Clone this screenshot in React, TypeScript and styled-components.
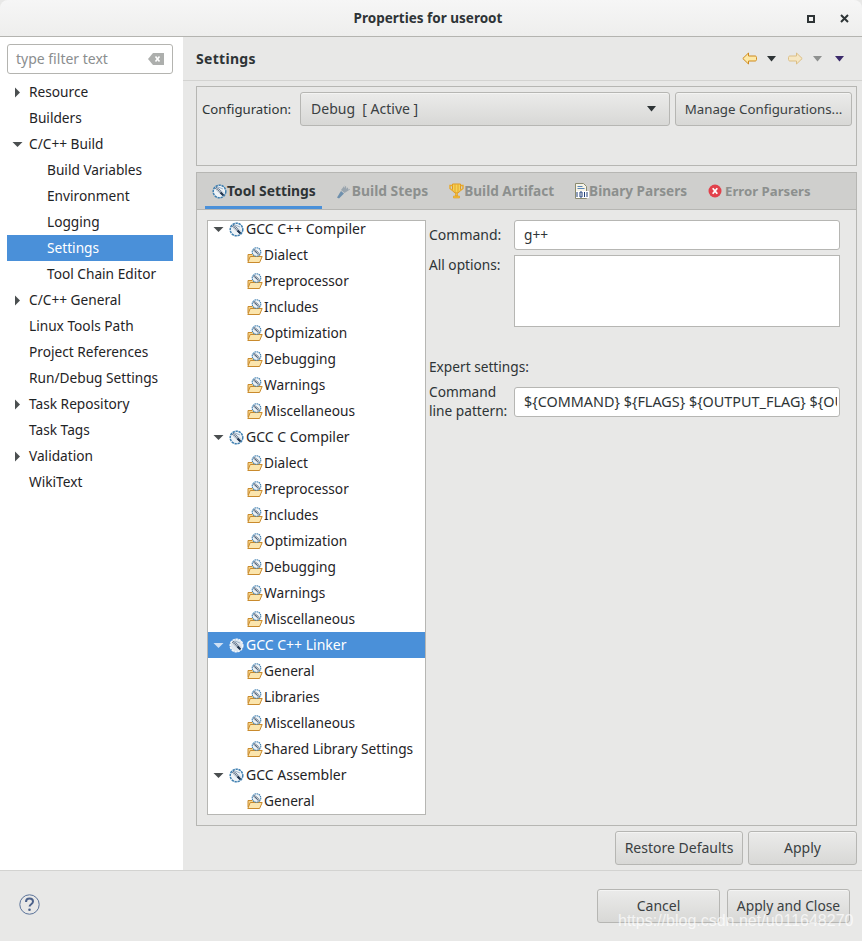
import React from "react";
import styled, { createGlobalStyle } from "styled-components";

const Global = createGlobalStyle`
  html, body { margin: 0; padding: 0; height: 941px; overflow: hidden; background: #fff; }
  #root { height: 941px; }
  * { box-sizing: border-box; }
`;

const Dialog = styled.div`
  width: 862px; height: 941px; position: relative; display: flex; flex-direction: column;
  background: #e8e8e7; color: #2e3436; font: 13.7px/20px "Noto Sans", sans-serif; overflow: hidden;
`;
const TitleBar = styled.header`
  height: 37px; flex: none; display: flex; align-items: center; position: relative;
  justify-content: center; padding-right: 6px; background: linear-gradient(#f6f6f6, #eeeeed);
  border-bottom: 1px solid #b4b4b0; border-radius: 8px 8px 0 0;
`;
const Title = styled.h1`margin: 0; font-size: 13.5px; font-weight: 700; color: #2e3436;`;
const WindowButtons = styled.div`
  position: absolute; right: 13px; top: 14px; display: flex; gap: 25px; align-items: center;
`;
const Body = styled.div`flex: 1; display: flex; min-height: 0;`;
const Sidebar = styled.nav`
  width: 183px; flex: none; background: #fff; padding: 7px 10px 0 7px;
`;
const FilterBox = styled.div`
  height: 30px; width: 166px; border: 1px solid #b4b4b0; border-radius: 3px; display: flex;
  align-items: center; justify-content: space-between; padding: 0 8px; margin-bottom: 5px; background: #fff;
`;
const FilterText = styled.span`color: #8b8e8f; font-size: 14px;`;
const NavRow = styled.div<{ $level: number; $selected?: boolean }>`
  height: 26px; display: flex; align-items: center; width: 166px; color: ${p => p.$selected ? "#fff" : "#1f2426"};
  background: ${p => p.$selected ? "#4a90d9" : "transparent"};
  padding-left: ${p => p.$level === 1 ? 40 : 22}px; position: relative; white-space: nowrap;
`;
const ArrowSlot = styled.span`position: absolute; left: 5px; top: 8px; width: 11px; height: 11px; display: flex;`;
const Main = styled.main`flex: 1; display: flex; flex-direction: column; padding: 0 5px 5px 0; min-width: 0;`;
const SettingsHeader = styled.div`
  height: 44px; margin-right: -5px; padding: 0 17px 0 13px; display: flex; align-items: center; justify-content: space-between;
  border-bottom: 1px solid #d3d3d1; flex: none;
`;
const SettingsTitle = styled.h2`margin: 0; font-size: 14px; font-weight: 700; color: #2e3436; letter-spacing: .3px;`;
const NavTools = styled.div`display: flex; align-items: center; gap: 11px;`;
const NavGroup = styled.div`display: flex; align-items: center; gap: 9px;`;
const Pane = styled.div`flex: 1; margin-left: 13px; display: flex; flex-direction: column; min-height: 0;`;
const ConfigGroup = styled.section`
  margin-top: 5px; height: 80px; flex: none; border: 1px solid #b6b6b3; padding: 5px 4px 0 5px;
  display: flex; align-items: flex-start; gap: 5px;
`;
const ConfigLabel = styled.label`line-height: 35px; margin-right: 4px; white-space: nowrap; font-size: 13.2px;`;
const Button = styled.button<{ $w?: number; $size?: number }>`
  height: 34px; width: ${p => p.$w ? `${p.$w}px` : "auto"}; border: 1px solid #b6b6b3; border-radius: 3px;
  background: linear-gradient(#ebebea, #d8d8d6); color: #3a4042; font: inherit; font-size: ${p => p.$size ?? 13.8}px; padding: 0 6px; white-space: nowrap;
  flex: none; box-shadow: inset 0 1px #f4f4f3;
`;
const Combo = styled(Button)`
  flex: 1; display: flex; align-items: center; justify-content: space-between; padding: 0 12px 0 10px; white-space: pre;
`;
const Folder = styled.section`
  margin-top: 6px; flex: 1; min-height: 0; border: 1px solid #b6b6b3; display: flex; flex-direction: column;
`;
const TabStrip = styled.div`
  height: 37px; flex: none; background: #cfcfcd; border-bottom: 1px solid #b6b6b3; display: flex; gap: 8px; padding-left: 8px;
`;
const Tab = styled.div<{ $active?: boolean; $size?: number }>`
  height: 36px; display: flex; align-items: center; padding: 0 6px 0 7px; font-size: ${p => p.$size ?? 13.6}px; font-weight: 700; white-space: nowrap;
  color: ${p => p.$active ? "#2e3436" : "#8c8f8e"};
  box-shadow: ${p => p.$active ? "inset 0 -3px #4a90d9" : "none"};
`;
const TabBody = styled.div`flex: 1; display: flex; padding: 10px 16px 10px 10px; min-height: 0;`;
const TreeBox = styled.div`
  width: 219px; flex: none; background: #fff; border: 1px solid #b6b6b3; overflow: hidden;
`;
const TreeScroll = styled.div`margin-top: -5px;`;
const TreeRow = styled.div<{ $child?: boolean; $selected?: boolean }>`
  height: 26px; display: flex; align-items: center; white-space: nowrap; position: relative;
  padding-left: ${p => p.$child ? 39 : 21}px; color: ${p => p.$selected ? "#fff" : "#1f2426"};
  background: ${p => p.$selected ? "#4a90d9" : "transparent"};
`;
const TreeArrow = styled.span`position: absolute; left: 5px; top: 8px; width: 11px; height: 11px; display: flex;`;
const GroupName = styled.span`margin-left: 2px; font-size: 14px;`;
const Form = styled.div`
  flex: 1; padding-left: 3px; display: grid; grid-template-columns: 85px 326px; grid-template-rows: 30px 72px 20px 25px 30px;
  row-gap: 5px; align-content: start;
`;
const FormLabel = styled.label`line-height: 30px; white-space: nowrap; font-size: 14px;`;
const OptionsLabel = styled.label`line-height: 20px; white-space: nowrap;`;
const PatternLabel = styled.label`grid-row: 5; grid-column: 1; line-height: 19px; white-space: nowrap; margin-top: -5px;`;
const Input = styled.div`
  background: #fff; border: 1px solid #b6b6b3; border-radius: 3px; padding: 0 8px 0 9px; line-height: 28px;
  color: #2e3436; white-space: nowrap;
`;
const PatternInput = styled(Input)`grid-row: 5; grid-column: 2; padding-right: 2px; font-size: 14.4px;`;
const PatternText = styled.span`display: block; overflow: hidden;`;
const TextArea = styled(Input)`border-radius: 0;`;
const ExpertTitle = styled.div`grid-column: 1 / 3; grid-row: 4; line-height: 20px;`;
const ButtonRow = styled.div`display: flex; justify-content: flex-end; gap: 5px; margin-top: 5px; flex: none;`;
const Footer = styled.footer`
  height: 71px; flex: none; border-top: 1px solid #d3d3d1; padding: 18px 12px 0 19px; display: flex; align-items: flex-start; justify-content: space-between;
`;
const HelpWrap = styled.div`margin-top: 5px; display: flex;`;
const FooterButtons = styled.div`display: flex; gap: 7px;`;
const Watermark = styled.div`
  position: absolute; left: 618px; top: 912px; color: rgba(255,255,255,0.72); font: 16px/18px "Liberation Sans", sans-serif; white-space: nowrap;
`;

const Tri = ({ open, color = "#4b4f50" }: { open?: boolean; color?: string }) => (
  <svg width="11" height="11" viewBox="0 0 11 11">
    {open ? <path d="M0.5 3h10L5.5 8z" fill={color} /> : <path d="M3 0.5v10l5-5z" fill={color} />}
  </svg>
);

const ToolIcon = ({ light }: { light?: boolean }) => (
  <svg width="15" height="15" viewBox="0 0 15 15" style={{ flex: "none" }}>
    <circle cx="7.5" cy="7.5" r="6.3" fill={light ? "#dfe6ee" : "#eef3f7"} stroke={light ? "#f4f7fa" : "#3f7fb0"} strokeWidth="1.5" strokeDasharray="2.4 0.7" />
    <path d="M4 3.5l6.5 6.5" stroke="#5d6f86" strokeWidth="3" strokeDasharray="1 .7" />
    <path d="M8.5 8.5l3 3" stroke="#22354f" strokeWidth="2" />
    <path d="M6 3l5 2" stroke="#9db3c8" strokeWidth="1" />
  </svg>
);

const OptionIcon = () => (
  <svg width="16" height="17" viewBox="0 0 16 17" style={{ flex: "none", marginRight: 1 }}>
    <path d="M1 7.5h4l1-1h6V14H1z" fill="#f7d48a" stroke="#c98a2c" />
    <path d="M0.8 15.5l2.4-6h12l-2.6 6z" fill="#fbe5ad" stroke="#c98a2c" />
    <circle cx="9.5" cy="5" r="4.3" fill="#eef3f7" stroke="#3f7fb0" strokeWidth="1.1" strokeDasharray="1.6 0.6" />
    <path d="M7 2.8l5 4.6" stroke="#47596f" strokeWidth="2.4" strokeDasharray="1 .6" />
  </svg>
);

const HammerIcon = () => (
  <svg width="15" height="15" viewBox="0 0 15 15" style={{ flex: "none" }}>
    <path d="M0 13.5l4-6.5 3 2.5-5 5z" fill="#6f90ad" />
    <path d="M4 6l3.5-4.5L13 5.5 7.5 9z" fill="#9aa5ae" />
    <path d="M7.5 1.5v2M9.5 2.5v2M11.5 3.5v2" stroke="#cfcfcd" strokeWidth=".8" />
  </svg>
);
const TrophyIcon = () => (
  <svg width="15" height="16" viewBox="0 0 15 16" style={{ flex: "none" }}>
    <path d="M3.5 1h8v5.5c0 2-1.7 3.5-4 3.5s-4-1.5-4-3.5z" fill="#f6d257" stroke="#e09a1f" />
    <path d="M6 1.5v7.5M9 1.5v7.5" stroke="#e09a1f" strokeWidth=".8" />
    <path d="M3.5 2.5H1v3l2.5 2M11.5 2.5H14v3l-2.5 2" fill="none" stroke="#e8a92a" strokeWidth="1.4" />
    <path d="M6.5 10h2v3h-2zM4.5 13h6v2h-6z" fill="#f1bf3c" stroke="#e09a1f" strokeWidth=".6" />
  </svg>
);
const BinaryIcon = () => (
  <svg width="14" height="16" viewBox="0 0 14 16" style={{ flex: "none" }}>
    <path d="M.5.5h8l3 3v12H.5z" fill="#f6f3e6" stroke="#8a8a70" />
    <path d="M2.5 3.5h5M2.5 5.5h7" stroke="#5a86b8" />
    <rect x="1" y="8" width="13" height="7" fill="#fff" />
    <path d="M2 9v5M5 9h2v5H5zM9.5 9v5M12 9v5" stroke="#1f3f78" fill="none" />
  </svg>
);
const ErrorIcon = () => (
  <svg width="14" height="14" viewBox="0 0 14 14" style={{ flex: "none", marginRight: 3 }}>
    <circle cx="7" cy="7" r="6.5" fill="#e2414b" />
    <path d="M4.7 4.2l4.6 5.6M9.3 4.2l-4.6 5.6" stroke="#fff" strokeWidth="1.8" />
  </svg>
);
const LeftArrow = ({ fill, stroke, flip }: { fill: string; stroke: string; flip?: boolean }) => (
  <svg width="15" height="13" viewBox="0 0 15 13" style={flip ? { transform: "scaleX(-1)" } : undefined}>
    <path d="M0.8 6.5L6.5 1v3h6.5c1 0 1.5.6 1.5 1.5v2c0 .9-.5 1.5-1.5 1.5H6.5v3z" fill={fill} stroke={stroke} />
  </svg>
);
const MiniDown = ({ color }: { color: string }) => (
  <svg width="11" height="6" viewBox="0 0 11 6"><path d="M1 0h9L5.5 5.5z" fill={color} /></svg>
);
const ClearIcon = () => (
  <svg width="16" height="12" viewBox="0 0 16 12">
    <path d="M0 6l5-6h11v12H5z" fill="#adafad" />
    <path d="M7.5 3.5l4 5M11.5 3.5l-4 5" stroke="#fff" strokeWidth="1.6" />
  </svg>
);
const HelpIcon = () => (
  <svg width="21" height="21" viewBox="0 0 21 21">
    <circle cx="10.5" cy="10.5" r="9.7" fill="none" stroke="#5a7299" strokeWidth="1" />
    <path d="M7 8c0-2.2 1.6-3.4 3.5-3.4S14 5.7 14 7.6c0 2.7-3.4 2.6-3.4 5" fill="none" stroke="#4c618a" strokeWidth="2" />
    <circle cx="10.5" cy="15.8" r="1.3" fill="#4c618a" />
  </svg>
);

type Nav = { label: string; level: number; arrow?: "open" | "closed"; selected?: boolean };
const navItems: Nav[] = [
  { label: "Resource", level: 0, arrow: "closed" },
  { label: "Builders", level: 0 },
  { label: "C/C++ Build", level: 0, arrow: "open" },
  { label: "Build Variables", level: 1 },
  { label: "Environment", level: 1 },
  { label: "Logging", level: 1 },
  { label: "Settings", level: 1, selected: true },
  { label: "Tool Chain Editor", level: 1 },
  { label: "C/C++ General", level: 0, arrow: "closed" },
  { label: "Linux Tools Path", level: 0 },
  { label: "Project References", level: 0 },
  { label: "Run/Debug Settings", level: 0 },
  { label: "Task Repository", level: 0, arrow: "closed" },
  { label: "Task Tags", level: 0 },
  { label: "Validation", level: 0, arrow: "closed" },
  { label: "WikiText", level: 0 },
];

const groups = [
  { name: "GCC C++ Compiler", kids: ["Dialect", "Preprocessor", "Includes", "Optimization", "Debugging", "Warnings", "Miscellaneous"] },
  { name: "GCC C Compiler", kids: ["Dialect", "Preprocessor", "Includes", "Optimization", "Debugging", "Warnings", "Miscellaneous"] },
  { name: "GCC C++ Linker", selected: true, kids: ["General", "Libraries", "Miscellaneous", "Shared Library Settings"] },
  { name: "GCC Assembler", kids: ["General"] },
];

export default function App() {
  return (
    <Dialog>
      <Global />
      <TitleBar>
        <Title>Properties for useroot</Title>
        <WindowButtons>
          <svg width="8" height="8" viewBox="0 0 8 8"><rect x="1" y="1" width="6" height="6" fill="none" stroke="#2e3436" strokeWidth="2" /></svg>
          <svg width="9" height="9" viewBox="0 0 9 9"><path d="M1 1l7 7M8 1l-7 7" stroke="#2e3436" strokeWidth="2" /></svg>
        </WindowButtons>
      </TitleBar>
      <Body>
        <Sidebar>
          <FilterBox>
            <FilterText>type filter text</FilterText>
            <ClearIcon />
          </FilterBox>
          {navItems.map(n => (
            <NavRow key={n.label} $level={n.level} $selected={n.selected}>
              {n.arrow && <ArrowSlot><Tri open={n.arrow === "open"} /></ArrowSlot>}
              {n.label}
            </NavRow>
          ))}
        </Sidebar>
        <Main>
          <SettingsHeader>
            <SettingsTitle>Settings</SettingsTitle>
            <NavTools>
              <NavGroup>
                <LeftArrow fill="#fde9a8" stroke="#cf8a1c" />
                <MiniDown color="#2e3436" />
              </NavGroup>
              <NavGroup>
                <LeftArrow fill="#f6e7c4" stroke="#dcbf85" flip />
                <MiniDown color="#8f9190" />
              </NavGroup>
              <MiniDown color="#3b2a6b" />
            </NavTools>
          </SettingsHeader>
          <Pane>
            <ConfigGroup>
              <ConfigLabel>Configuration:</ConfigLabel>
              <Combo as="div" $size={14}>
                <span>Debug  [ Active ]</span>
                <MiniDown color="#2e3436" />
              </Combo>
              <Button $w={177} $size={13.3}>Manage Configurations...</Button>
            </ConfigGroup>
            <Folder>
              <TabStrip>
                <Tab $active $size={13.85}><ToolIcon />Tool Settings</Tab>
                <Tab $size={13.85}><HammerIcon />Build Steps</Tab>
                <Tab><TrophyIcon />Build Artifact</Tab>
                <Tab><BinaryIcon />Binary Parsers</Tab>
                <Tab $size={13.2}><ErrorIcon />Error Parsers</Tab>
              </TabStrip>
              <TabBody>
                <TreeBox>
                  <TreeScroll>
                    {groups.map(g => (
                      <React.Fragment key={g.name}>
                        <TreeRow $selected={g.selected}>
                          <TreeArrow><Tri open color={g.selected ? "#cfe0f4" : "#4b4f50"} /></TreeArrow>
                          <ToolIcon light={g.selected} />
                          <GroupName>{g.name}</GroupName>
                        </TreeRow>
                        {g.kids.map(k => (
                          <TreeRow $child key={g.name + k}><OptionIcon />{k}</TreeRow>
                        ))}
                      </React.Fragment>
                    ))}
                  </TreeScroll>
                </TreeBox>
                <Form>
                  <FormLabel>Command:</FormLabel>
                  <Input>g++</Input>
                  <OptionsLabel>All options:</OptionsLabel>
                  <TextArea />
                  <ExpertTitle>Expert settings:</ExpertTitle>
                  <PatternLabel>Command<br />line pattern:</PatternLabel>
                  <PatternInput><PatternText>{"${COMMAND} ${FLAGS} ${OUTPUT_FLAG} ${OUTPUT_PREFIX}${OUTPUT} ${INPUTS}"}</PatternText></PatternInput>
                </Form>
              </TabBody>
            </Folder>
            <ButtonRow>
              <Button $w={128} $size={14}>Restore Defaults</Button>
              <Button $w={109} $size={14}>Apply</Button>
            </ButtonRow>
          </Pane>
        </Main>
      </Body>
      <Footer>
        <HelpWrap><HelpIcon /></HelpWrap>
        <FooterButtons>
          <Button $w={123} $size={14}>Cancel</Button>
          <Button $w={123}>Apply and Close</Button>
        </FooterButtons>
      </Footer>
      <Watermark>https://blog.csdn.net/u011648270</Watermark>
    </Dialog>
  );
}
